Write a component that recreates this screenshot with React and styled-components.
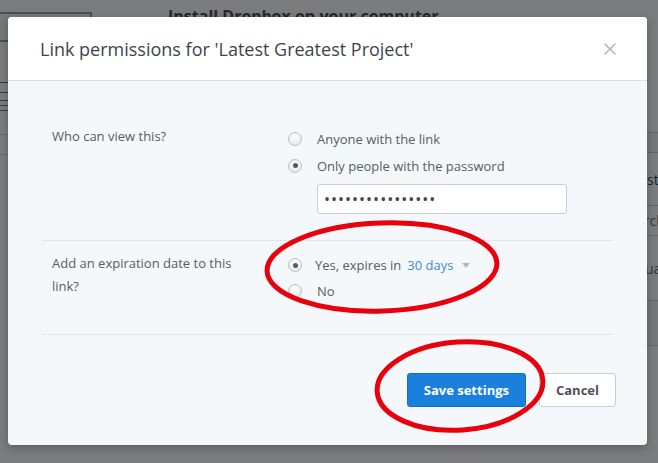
import styled, { createGlobalStyle } from "styled-components";

const GlobalStyle = createGlobalStyle`
  html, body {
    margin: 0;
    padding: 0;
  }
  body {
    width: 658px;
    height: 463px;
    overflow: hidden;
    font-family: "Open Sans", "Liberation Sans", sans-serif;
    background: #f6f8fa;
  }
`;

/* ---------- page behind the dialog ---------- */

const Page = styled.div`
  position: relative;
  height: 463px;
  display: grid;
  grid-template-columns: 160px 1fr;
`;

const Sidebar = styled.div`
  padding-top: 12px;
  display: flex;
  flex-direction: column;
`;

const SearchBox = styled.div`
  width: 90px;
  height: 26px;
  border: 2px solid #9aa0a6;
  border-left: none;
  background: #eef0f2;
`;

const SideRule = styled.div`
  height: ${({ $h }) => $h}px;
  border-bottom: 1px solid ${({ $dark }) => ($dark ? "#6f757b" : "#c9ced3")};
`;

const Main = styled.div`
  display: flex;
  flex-direction: column;
  min-width: 0;
`;

const PageTitle = styled.h2`
  margin: 6px 0 0 8px;
  font-size: 16px;
  font-weight: 700;
  color: #4a5056;
  line-height: 20px;
`;

const ListRow = styled.div`
  height: ${({ $h }) => $h}px;
  border-bottom: 1px solid #c4cacf;
  background: ${({ $shade }) => ($shade ? "#eceff2" : "transparent")};
  display: flex;
  align-items: center;
  padding-left: ${({ $indent }) => $indent || 0}px;
  font-size: 14px;
  color: ${({ $link }) => ($link ? "#2a4f7a" : "#6a7178")};
  white-space: nowrap;
  overflow: hidden;
`;

/* ---------- dim layer and dialog ---------- */

const Overlay = styled.div`
  position: absolute;
  inset: 0;
  background: rgba(0, 0, 0, 0.5);
  padding: 17px 0 0 8px;
`;

const Dialog = styled.div`
  width: 639px;
  background: #f5f8fb;
  border-radius: 4px;
  overflow: hidden;
  box-shadow: 0 3px 10px rgba(0, 0, 0, 0.25);
`;

const Header = styled.div`
  height: 64px;
  box-sizing: border-box;
  background: #ffffff;
  border-bottom: 1px solid #d9dee3;
  padding: 0 32px;
  display: flex;
  align-items: center;
  justify-content: space-between;
`;

const Title = styled.h1`
  margin: 0;
  font-size: 18px;
  font-weight: 400;
  color: #3d454c;
`;

const CloseButton = styled.button`
  border: none;
  background: none;
  padding: 0;
  width: 14px;
  height: 14px;
  display: flex;
  align-items: center;
  justify-content: center;
  cursor: pointer;
  margin-right: -2px;
`;

const Body = styled.div`
  padding: 32px 34px 38px;
`;

const Row = styled.div`
  display: grid;
  grid-template-columns: 231px 1fr;
  border-bottom: 1px solid #e1e6ea;
  padding: ${({ $top }) => $top}px 0 ${({ $bottom }) => $bottom}px;
`;

const Label = styled.div`
  padding-left: 10px;
  font-size: 13px;
  line-height: 23px;
  color: #555d65;
`;

const Options = styled.div`
  padding-left: 15px;
  display: flex;
  flex-direction: column;
`;

const Option = styled.label`
  height: ${({ $h }) => $h || 27}px;
  display: flex;
  align-items: center;
  gap: ${({ $gap }) => $gap || 15}px;
  font-size: 13px;
  line-height: 18px;
  color: #555d65;
  white-space: nowrap;
`;

const Radio = styled.span`
  width: 12px;
  height: 12px;
  border-radius: 50%;
  border: 1px solid #bcc1c6;
  background: radial-gradient(circle at 50% 35%, #ffffff 0%, #e2e4e6 100%);
  display: flex;
  align-items: center;
  justify-content: center;
  flex: none;

  &::after {
    content: "";
    width: 5px;
    height: 5px;
    border-radius: 50%;
    background: ${({ $checked }) => ($checked ? "#555b61" : "transparent")};
  }
`;

const PasswordInput = styled.input`
  margin: 5px 0 0 29px;
  width: 250px;
  height: 30px;
  box-sizing: border-box;
  border: 1px solid #c9ced3;
  border-radius: 3px;
  background: #ffffff;
  padding: 0 6px;
  font-family: "Open Sans", "Liberation Sans", sans-serif;
  font-size: 16px;
  letter-spacing: 1px;
  color: #3d454c;
  outline: none;
`;

const OptionText = styled.span`
  display: flex;
  align-items: center;
  gap: 6px;
`;

const DaysLink = styled.span`
  color: #3d8ed4;
`;

const Caret = styled.span`
  width: 0;
  height: 0;
  border-left: 4px solid transparent;
  border-right: 4px solid transparent;
  border-top: 5px solid #b4b9be;
  margin: 1px 0 0 3px;
`;

const Footer = styled.div`
  padding-top: 38px;
  display: flex;
  justify-content: flex-end;
  gap: 13px;
  margin-right: -3px;
`;

const Button = styled.button`
  height: 34px;
  box-sizing: border-box;
  padding: 0 16px;
  border-radius: 3px;
  font-family: "Open Sans", "Liberation Sans", sans-serif;
  font-size: 13px;
  font-weight: 700;
  white-space: nowrap;
  cursor: pointer;
  border: 1px solid ${({ $primary }) => ($primary ? "#1271c4" : "#c8cdd2")};
  background: ${({ $primary }) => ($primary ? "#1a80dc" : "#ffffff")};
  color: ${({ $primary }) => ($primary ? "#ffffff" : "#4b535a")};
  min-width: ${({ $w }) => $w}px;
`;

const Annotations = styled.svg`
  position: absolute;
  inset: 0;
  pointer-events: none;
`;

export default function App() {
  return (
    <>
      <GlobalStyle />
      <Page>
        <Sidebar>
          <SearchBox />
          <SideRule $h={40} $dark />
          <SideRule $h={9} $dark />
          <SideRule $h={7} $dark />
          <SideRule $h={4} $dark />
          <SideRule $h={4} $dark />
          <SideRule $h={23} />
          <SideRule $h={19} />
        </Sidebar>
        <Main>
          <PageTitle>Install Dropbox on your computer</PageTitle>
          <ListRow $h={106} />
          <ListRow $h={19} $shade />
          <ListRow $h={52} $link $indent={472}>
            Last update
          </ListRow>
          <ListRow $h={29} $indent={475}>
            Archive
          </ListRow>
          <ListRow $h={64} $indent={474}>
            Quarterly
          </ListRow>
          <ListRow $h={44} $shade />
        </Main>

        <Overlay>
          <Dialog>
            <Header>
              <Title>Link permissions for 'Latest Greatest Project'</Title>
              <CloseButton aria-label="Close">
                <svg width="12" height="12" viewBox="0 0 12 12">
                  <path
                    d="M1 1 L11 11 M11 1 L1 11"
                    stroke="#b3b8bd"
                    strokeWidth="1.6"
                    strokeLinecap="round"
                  />
                </svg>
              </CloseButton>
            </Header>
            <Body>
              <Row $top={12} $bottom={26}>
                <Label>Who can view this?</Label>
                <Options>
                  <Option>
                    <Radio />
                    Anyone with the link
                  </Option>
                  <Option>
                    <Radio $checked />
                    Only people with the password
                  </Option>
                  <PasswordInput
                    type="password"
                    readOnly
                    value="secretpassword12"
                  />
                </Options>
              </Row>
              <Row $top={11} $bottom={30}>
                <Label>
                  Add an expiration date to this
                  <br />
                  link?
                </Label>
                <Options>
                  <Option $h={26} $gap={13}>
                    <Radio $checked />
                    <OptionText>
                      <span>Yes, expires in</span>
                      <DaysLink>30 days</DaysLink>
                      <Caret />
                    </OptionText>
                  </Option>
                  <Option $h={26}>
                    <Radio />
                    No
                  </Option>
                </Options>
              </Row>
              <Footer>
                <Button $primary $w={119}>
                  Save settings
                </Button>
                <Button $w={76}>Cancel</Button>
              </Footer>
            </Body>
          </Dialog>
        </Overlay>

        <Annotations width="658" height="463" viewBox="0 0 658 463">
          <ellipse
            cx="382"
            cy="267"
            rx="115"
            ry="44"
            fill="none"
            stroke="#e8000c"
            strokeWidth="5"
            transform="rotate(-2 382 267)"
          />
          <ellipse
            cx="460"
            cy="386"
            rx="83"
            ry="44"
            fill="none"
            stroke="#e8000c"
            strokeWidth="5"
            transform="rotate(-4 460 386)"
          />
        </Annotations>
      </Page>
    </>
  );
}
